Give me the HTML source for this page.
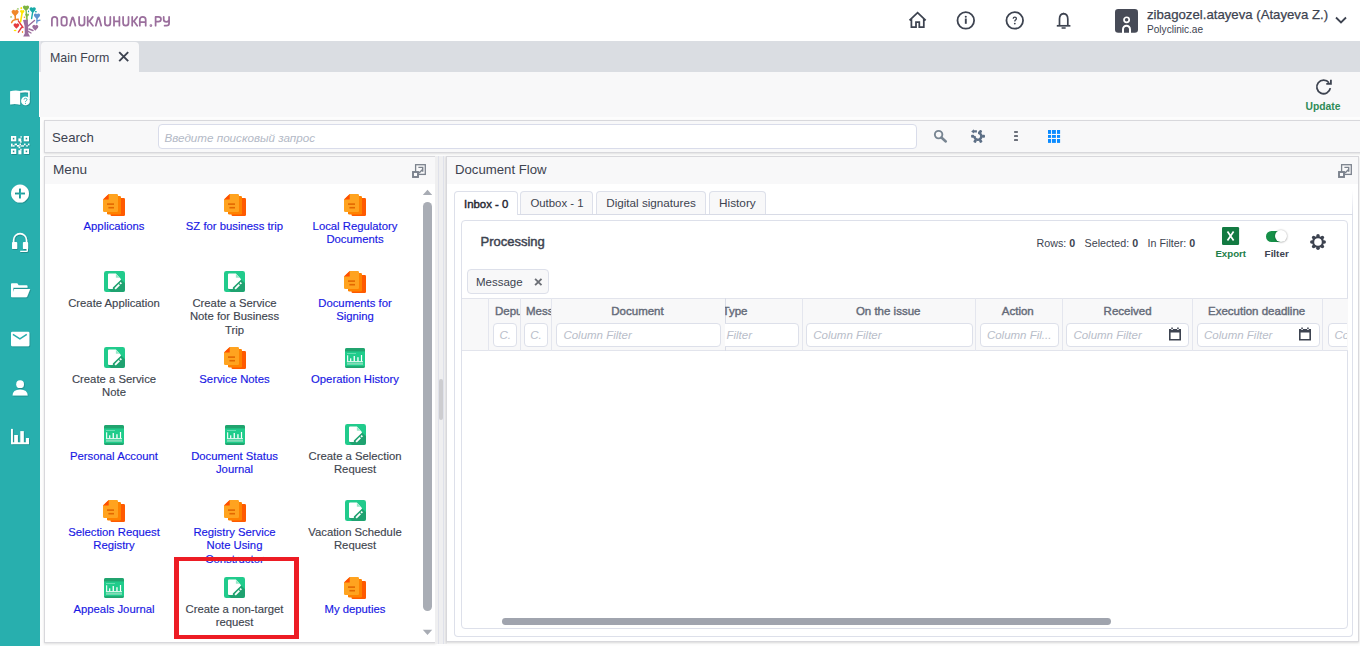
<!DOCTYPE html>
<html><head><meta charset="utf-8">
<style>
*{box-sizing:border-box;margin:0;padding:0}
html,body{width:1360px;height:646px;overflow:hidden;background:#fdfdfd;font-family:"Liberation Sans",sans-serif;color:#3d4350}
.a{position:absolute}
.t{position:absolute;white-space:nowrap;line-height:1}
#hdr{left:0;top:0;width:1360px;height:41px;background:#fff}
#side{left:0;top:41px;width:39px;height:605px;background:#28afae}
#tabbar{left:39px;top:41px;width:1321px;height:31px;background:#dadde2;border-left:2px solid #e4e4ea}
#tab1{left:41px;top:42px;width:98px;height:30px;background:#f8f8f9;border-radius:4px 4px 0 0}
#tool{left:39px;top:72px;width:1321px;height:45px;background:#f8f8f9;border-left:1px solid #fff}
#searchbox{left:44px;top:120px;width:1320px;height:32.5px;background:#f8f8f9;border:1px solid #d8d8dc;box-shadow:0 1px 2px rgba(0,0,0,.12)}
#sinput{left:158px;top:124px;width:759px;height:24.8px;background:#fff;border:1px solid #d9dcea;border-radius:4px}
#menu{left:44px;top:156px;width:392px;height:487px;background:#fff;border:1px solid #d8d8dc;box-shadow:0 1px 2px rgba(0,0,0,.12)}
#menuhdr{left:45px;top:157px;width:390px;height:27px;background:#f8f8f9}
#split{left:435px;top:156px;width:12px;height:488px;background:#efeff0}
#df{left:446px;top:156.3px;width:913px;height:486px;background:#fff;border:1px solid #d8d8dc;box-shadow:0 1px 2px rgba(0,0,0,.15)}
#dfhdr{left:447px;top:157.3px;width:911px;height:26.6px;background:#f8f8f9}
.mi{position:absolute;width:124px;text-align:center}
.mi svg{position:absolute;left:51px;top:0}
.mi .l{position:absolute;left:-10px;width:144px;top:25.7px;font-size:11.3px;line-height:13.6px;white-space:nowrap;color:#40454f;-webkit-text-stroke:0.15px currentColor}
.mi .b{color:#1818e4}
.dtab{position:absolute;top:191px;height:23.2px;border:1px solid #dde0ea;border-bottom:none;border-radius:4px 4px 0 0;background:#f8f8f9}
.hd{position:absolute;top:305.6px;font-size:11.5px;-webkit-text-stroke:0.4px #646a78;color:#646a78;white-space:nowrap;line-height:1}
.cf{position:absolute;top:323.4px;height:23.2px;border:1px solid #dde0ea;border-radius:4px;background:#fff;overflow:hidden}
.cf span{position:absolute;left:6px;top:6px;font-size:11.5px;font-style:italic;color:#b8bdc9;white-space:nowrap;line-height:1}
.vs{position:absolute;top:298px;width:1px;height:53px;background:#e4e6ee}

</style></head><body>
<div class="a" id="hdr"></div>
<svg class="a" style="left:0;top:0" width="50" height="41" viewBox="0 0 50 41">
<path d="M0 1L-0.93 0.02A0.56 0.56 0 0 1 0 -0.62A0.56 0.56 0 0 1 0.93 0.02Z" transform="translate(26 8.2) scale(3.0 3.1500000000000004)" fill="#7cb342"/>
<path d="M0 1L-0.93 0.02A0.56 0.56 0 0 1 0 -0.62A0.56 0.56 0 0 1 0.93 0.02Z" transform="translate(32.7 10) scale(3.0 3.1500000000000004)" fill="#17aaa8"/>
<path d="M0 1L-0.93 0.02A0.56 0.56 0 0 1 0 -0.62A0.56 0.56 0 0 1 0.93 0.02Z" transform="translate(15.1 12.9) scale(3.4 3.57)" fill="#f0882a"/>
<path d="M0 1L-0.93 0.02A0.56 0.56 0 0 1 0 -0.62A0.56 0.56 0 0 1 0.93 0.02Z" transform="translate(22.2 11.9) scale(2.1 2.205)" fill="#ffe500"/>
<path d="M0 1L-0.93 0.02A0.56 0.56 0 0 1 0 -0.62A0.56 0.56 0 0 1 0.93 0.02Z" transform="translate(27.1 15.2) scale(1.9 1.9949999999999999)" fill="#8cc152"/>
<path d="M0 1L-0.93 0.02A0.56 0.56 0 0 1 0 -0.62A0.56 0.56 0 0 1 0.93 0.02Z" transform="translate(37 16.2) scale(3.0 3.1500000000000004)" fill="#5d93cf"/>
<path d="M0 1L-0.93 0.02A0.56 0.56 0 0 1 0 -0.62A0.56 0.56 0 0 1 0.93 0.02Z" transform="translate(16.4 25.9) scale(2.8 2.94)" fill="#e5393f"/>
<path d="M0 1L-0.93 0.02A0.56 0.56 0 0 1 0 -0.62A0.56 0.56 0 0 1 0.93 0.02Z" transform="translate(35.3 27.6) scale(2.9 3.045)" fill="#9a6c9c"/>
<path d="M26.2 11.5L26.6 19" stroke="#7cb342" stroke-width="1.3" fill="none" stroke-linecap="round"/>
<path d="M32.6 12.5L31.6 18.5" stroke="#17aaa8" stroke-width="1.4" fill="none" stroke-linecap="round"/>
<path d="M15.2 15L15.3 19.2M11.6 22.6Q13 19.2 18.3 19.3" stroke="#f0882a" stroke-width="1.5" fill="none" stroke-linecap="round"/>
<path d="M22 13.5L20.6 21.6" stroke="#ffe500" stroke-width="1.6" fill="none" stroke-linecap="round"/>
<path d="M27 17L27.2 21" stroke="#8cc152" stroke-width="1.2" fill="none" stroke-linecap="round"/>
<path d="M37 18.5L36.8 23M37 21L40 20.2" stroke="#5d93cf" stroke-width="1.3" fill="none" stroke-linecap="round"/>
<path d="M18.3 20.8L23 27.5M21.5 27.5L18.4 32.2" stroke="#e5393f" stroke-width="1.4" fill="none" stroke-linecap="round"/>
<path d="M28 26L34.5 20.5M28.5 31.5L31 33M29 29L33 30.5" stroke="#9a6c9c" stroke-width="1.4" fill="none" stroke-linecap="round"/>
<path d="M23 20L27.8 19.6L28.4 33.5L30 36.6H23.2L24.8 33.5L24.6 26Z" fill="#9a6c9c"/>
<ellipse cx="21.3" cy="8.2" rx="0.9" ry="1.1" fill="#ffe500"/>
<ellipse cx="17.9" cy="8.9" rx="1.1" ry="0.7" fill="#8cc152"/>
<ellipse cx="11.1" cy="16.9" rx="1.1" ry="0.7" fill="#8cc152"/>
<ellipse cx="15.1" cy="30.5" rx="1.4" ry="0.8" fill="#ffe500"/>
<ellipse cx="22.5" cy="32" rx="0.7" ry="0.9" fill="#f0882a"/>
<ellipse cx="28.5" cy="11.4" rx="0.6" ry="0.9" fill="#17aaa8"/>
<ellipse cx="35.9" cy="11.8" rx="1.0" ry="0.7" fill="#17aaa8"/>
<ellipse cx="24.4" cy="17.2" rx="0.7" ry="0.8" fill="#f0882a"/>
</svg>

<svg class="a" style="left:51px;top:15.5px" width="121" height="12" viewBox="0 0 121 12">
<g fill="none" stroke="#9b6f9d" stroke-width="1.75" stroke-linecap="round" stroke-linejoin="round">
<path transform="translate(0,0)" d="M0.9 9.7V3.6Q0.9 0.9 3.6 0.9Q6.3 0.9 6.3 3.6V9.7"/>
<rect x="10.4" y="0.9" width="5.4" height="8.8" rx="2.4"/>
<path transform="translate(18.1,0)" d="M0.9 9.7L3 2Q3.6 0.6 4.2 2L6.3 9.7"/>
<path transform="translate(27.2,0)" d="M0.9 0.9V7Q0.9 9.7 3.6 9.7Q6.3 9.7 6.3 7V0.9"/>
<path transform="translate(35.8,0)" d="M0.9 0.9V9.7M0.9 5.3H2.6L6 0.9M2.6 5.3L6.1 9.7"/>
<path transform="translate(43.9,0)" d="M0.9 9.7L3 2Q3.6 0.6 4.2 2L6.3 9.7"/>
<path transform="translate(53,0)" d="M0.9 0.9V7Q0.9 9.7 3.6 9.7Q6.3 9.7 6.3 7V0.9"/>
<path transform="translate(62.1,0)" d="M0.9 0.9V9.7M6.3 0.9V9.7M0.9 5.3H6.3"/>
<path transform="translate(71.2,0)" d="M0.9 0.9V7Q0.9 9.7 3.6 9.7Q6.3 9.7 6.3 7V0.9"/>
<path transform="translate(80.3,0)" d="M0.9 0.9V9.7M0.9 5.3H2.6L5.8 0.9M2.6 5.3L5.9 9.7"/>
<path transform="translate(87.9,0)" d="M0.9 9.7V3.8Q0.9 0.9 3.8 0.9Q6.8 0.9 6.8 3.8V9.7M0.9 6.2H6.8"/>
<circle cx="99.9" cy="9.5" r="0.5"/>
<path transform="translate(103.7,0)" d="M0.9 9.7V0.9H3.8Q6.3 0.9 6.3 3.3Q6.3 5.6 3.8 5.6H0.9"/>
<path transform="translate(111.8,0)" d="M0.9 0.9V3.6Q0.9 5.9 3.6 5.9Q6.3 5.9 6.3 3.6V0.9M6.3 3.6V7.3Q6.3 9.7 3.6 9.7H1.8"/>
</g>
</svg>
<svg class="a" style="left:907px;top:9px" width="21" height="21" viewBox="0 0 21 21">
<path d="M2.5 11.4L10.6 3.6L18.7 11.4M4.4 9.6V18.1H9V13H12.3V18.1H16.8V9.6" fill="none" stroke="#3d4350" stroke-width="1.75"/>
</svg>
<svg class="a" style="left:955px;top:10px" width="22" height="22" viewBox="0 0 22 22">
<circle cx="10.8" cy="10.4" r="8.3" fill="none" stroke="#3d4350" stroke-width="1.8"/>
<circle cx="10.8" cy="6.8" r="1.05" fill="#3d4350"/>
<rect x="9.85" y="8.5" width="1.9" height="5.3" fill="#3d4350"/>
</svg>
<svg class="a" style="left:1004px;top:10px" width="22" height="22" viewBox="0 0 22 22">
<circle cx="10.75" cy="10.4" r="8.3" fill="none" stroke="#3d4350" stroke-width="1.8"/>
<path d="M9.2 8.7Q9.2 7.1 10.8 7.1Q12.4 7.1 12.4 8.6Q12.4 9.6 11.4 10.1Q10.8 10.5 10.8 11.6" fill="none" stroke="#3d4350" stroke-width="1.3"/>
<circle cx="10.8" cy="13.6" r="0.9" fill="#3d4350"/>
</svg>
<svg class="a" style="left:1053px;top:9.3px" width="21" height="21" viewBox="0 0 21 21">
<path d="M6.5 16.8V10Q6.5 5.1 10.6 4.6Q14.8 5.1 14.8 10V16.8" fill="none" stroke="#3d4350" stroke-width="1.7"/>
<path d="M3.8 16.8H17.4" stroke="#3d4350" stroke-width="1.7"/>
<path d="M9.6 4.9L10.6 3.4L11.6 4.9Z" fill="#3d4350"/>
<path d="M9.1 19.1H12.1" stroke="#3d4350" stroke-width="1.5" stroke-linecap="round"/>
</svg>
<svg class="a" style="left:1115px;top:9px" width="23" height="24" viewBox="0 0 23 24">
<rect width="23" height="23.7" rx="3.2" fill="#474b57"/>
<circle cx="11.6" cy="10.85" r="2.6" fill="none" stroke="#fff" stroke-width="1.7"/>
<path d="M8 24V20.3A3.5 3.5 0 0 1 15 20.3V24" fill="none" stroke="#fff" stroke-width="2"/>
</svg>
<div class="t" style="left:1147px;top:7.7px;font-size:13.2px;color:#3d4350;-webkit-text-stroke:0.25px #3d4350">zibagozel.atayeva (Atayeva Z.)</div>
<div class="t" style="left:1147px;top:25px;font-size:10.1px;color:#3d4350">Polyclinic.ae</div>
<svg class="a" style="left:1333px;top:14px" width="16" height="12" viewBox="0 0 16 12">
<path d="M3 3.5L8 8.5L13 3.5" fill="none" stroke="#3d4350" stroke-width="1.8"/>
</svg>
<div class="a" id="side"></div>
<div class="a" style="left:39px;top:117px;width:1px;height:529px;background:#28afae"></div>
<svg class="a" style="left:0;top:41px" width="39" height="420" viewBox="0 41 39 420">
<g fill="#fff" filter="url(#sh)">
<!-- book -->
<path d="M10.1 91.3Q15 89.8 20.1 90.9V104.7Q15 103.3 10.1 104.5Z"/>
<path d="M20.1 90.9Q25 89.7 29.8 90.7V99H28.1V92.5Q25 91.9 20.1 92.7Z"/>
<circle cx="25.5" cy="100.9" r="4.4"/>
<!-- qr -->
<path d="M11 136h5.2v5.2h-5.2Z M12.8 137.8v1.6h1.6v-1.6Z" fill-rule="evenodd"/><path d="M23.8 136h5.2v5.2h-5.2Z M25.6 137.8v1.6h1.6v-1.6Z" fill-rule="evenodd"/><path d="M11 148.8h5.2v5.2h-5.2Z M12.8 150.60000000000002v1.6h1.6v-1.6Z" fill-rule="evenodd"/><path d="M23.8 148.8h5.2v5.2h-5.2Z M25.6 150.60000000000002v1.6h1.6v-1.6Z" fill-rule="evenodd"/>
<rect x="20.4" y="136.2" width="1.4" height="1.4"/><rect x="18.4" y="138.4" width="2.8" height="2.9"/><rect x="20" y="141.2" width="1.6" height="1.4"/>
<rect x="11" y="143.6" width="1.6" height="3"/><rect x="12.6" y="145.2" width="2" height="1.4"/><rect x="14.6" y="143.6" width="2.4" height="1.6"/><rect x="17" y="145" width="2.5" height="1.6"/><rect x="19.5" y="143.6" width="1.5" height="1.4"/><rect x="20.5" y="145.3" width="3.5" height="1.3"/><rect x="24" y="143.6" width="1.6" height="1.6"/><rect x="26.3" y="145" width="1.4" height="1.6"/><rect x="28" y="143.6" width="1.4" height="1.6"/>
<rect x="18.6" y="146.6" width="1.6" height="1.6"/><rect x="20.2" y="148.8" width="1.4" height="1.4"/><rect x="18.4" y="150.2" width="3" height="4"/>
<!-- plus circle -->
<path d="M20 184.6a9 9 0 1 0 0.01 0Z M19 188.5h2v4h4v2h-4v4h-2v-4h-4v-2h4Z" fill-rule="evenodd"/>
<!-- headset -->
<path d="M12.8 243.5V240.1A7.25 7.25 0 0 1 27.3 240.1V243.5H25.7V240.1A5.65 5.65 0 0 0 14.4 240.1V243.5Z"/>
<rect x="12" y="242" width="5.2" height="7.1" rx="0.9"/>
<rect x="22.9" y="242" width="5.2" height="7.1" rx="0.9"/>
<path d="M26.6 248.5H28V250.6A1.5 1.5 0 0 1 26.5 252.1H20.2V250.7H26.6Z"/>
<!-- folder -->
<path d="M11.9 283.2H17.3L18.7 285.2H26.6Q27.5 285.2 27.5 286.1V287.7H13.3V296.8H11V284.1Q11 283.2 11.9 283.2Z"/>
<path d="M14.2 289H30.2L27.2 296.6Q26.9 297.3 26.1 297.3H11.8Q11 297.3 11.2 296.6Z"/>
<!-- mail -->
<rect x="11" y="331.7" width="18.4" height="14.5" rx="1.2"/>
<!-- user -->
<circle cx="20.1" cy="384.2" r="3.9"/>
<path d="M12.5 395.4Q12.6 389.5 20.1 389.4Q27.6 389.5 27.7 395.4Z"/>
<!-- chart -->
<rect x="11" y="428.9" width="1.9" height="15.2"/>
<rect x="11" y="442.3" width="18" height="1.8"/>
<rect x="14.2" y="435" width="3.7" height="8"/>
<rect x="20.3" y="431.1" width="3.5" height="12"/>
<rect x="25.9" y="438" width="3.1" height="5"/>
</g>
<path d="M24 99.6Q24 98.3 25.5 98.3Q27 98.3 27 99.5Q27 100.3 26.1 100.8Q25.5 101.1 25.5 101.9" fill="none" stroke="#28afae" stroke-width="0.9"/>
<circle cx="25.5" cy="103.2" r="0.55" fill="#28afae"/>
<path d="M12.9 334.3L19.9 338.9L26.8 334.3" fill="none" stroke="#28afae" stroke-width="1.5"/>
<defs><filter id="sh" x="-10%" y="-10%" width="120%" height="120%"><feDropShadow dx="0.6" dy="0.8" stdDeviation="0.3" flood-color="#000" flood-opacity="0.25"/></filter></defs>
</svg>
<div class="a" id="tabbar"></div>
<div class="a" id="tab1"></div>
<div class="t" style="left:50px;top:52px;font-size:12.4px;color:#3d4350">Main Form</div>
<svg class="a" style="left:118px;top:51px" width="12" height="12" viewBox="0 0 12 12"><path d="M1.2 1.2L10.2 10.2M10.2 1.2L1.2 10.2" stroke="#3d4350" stroke-width="1.9"/></svg>
<div class="a" id="tool"></div>
<svg class="a" style="left:1314px;top:77px" width="20" height="20" viewBox="0 0 20 20">
<path d="M16.3 11.1A6.8 6.8 0 1 1 15 5.8" fill="none" stroke="#3d4350" stroke-width="1.8"/>
<path d="M12.3 6.9H16.9V2.7" fill="none" stroke="#3d4350" stroke-width="1.8"/>
</svg>
<div class="t" style="left:1305.5px;top:101.5px;font-size:10.3px;font-weight:bold;color:#2e8b57">Update</div>
<div class="a" id="searchbox"></div>
<div class="t" style="left:52px;top:131px;font-size:13.2px">Search</div>
<div class="a" id="sinput"></div>
<div class="t" style="left:164.5px;top:132.2px;font-size:11.65px;font-style:italic;color:#b3b9c6">Введите поисковый запрос</div>
<svg class="a" style="left:932px;top:128px" width="17" height="17" viewBox="0 0 17 17">
<circle cx="6.6" cy="6.6" r="3.75" fill="none" stroke="#788592" stroke-width="1.9"/>
<path d="M9.4 9.5L13.8 13.5" stroke="#788592" stroke-width="2.5" stroke-linecap="round"/>
</svg>
<svg class="a" style="left:966px;top:124px" width="24" height="24" viewBox="0 0 24 24"><path d="M12.02 8.85A3.45 3.45 0 1 1 8.48 11.82" fill="none" stroke="#5d6f86" stroke-width="2.5"/><rect x="12.89" y="6.17" width="3" height="2.9" rx="0.9" transform="rotate(-62 14.39 7.62)" fill="#5d6f86"/><rect x="16.00" y="10.85" width="3" height="2.9" rx="0.9" transform="rotate(0 17.50 12.30)" fill="#5d6f86"/><rect x="13.20" y="15.70" width="3" height="2.9" rx="0.9" transform="rotate(60 14.70 17.15)" fill="#5d6f86"/><rect x="7.60" y="15.70" width="3" height="2.9" rx="0.9" transform="rotate(120 9.10 17.15)" fill="#5d6f86"/><rect x="5.10" y="10.85" width="3" height="2.9" rx="0.9" transform="rotate(180 6.60 12.30)" fill="#5d6f86"/><path d="M5.2 7.4L7.9 5.2V6.3H10.9V8.6H7.9V9.6Z" fill="#5d6f86"/></svg>
<svg class="a" style="left:1012px;top:129px" width="8" height="14" viewBox="0 0 8 14">
<g fill="#3d4350"><rect x="2" y="2.2" width="4" height="1.5" rx=".6"/><rect x="2" y="6.3" width="4" height="1.5" rx=".6"/><rect x="2" y="10.3" width="4" height="1.5" rx=".6"/></g>
</svg>
<svg class="a" style="left:1047px;top:129px" width="15" height="15" viewBox="0 0 15 15"><g fill="#0b8bff"><rect x="1" y="1" width="3.1" height="3.9"/><rect x="1" y="6" width="3.1" height="2.9"/><rect x="1" y="10" width="3.1" height="3.9"/><rect x="5" y="1" width="3.9" height="3.9"/><rect x="5" y="6" width="3.9" height="2.9"/><rect x="5" y="10" width="3.9" height="3.9"/><rect x="10" y="1" width="3.1" height="3.9"/><rect x="10" y="6" width="3.1" height="2.9"/><rect x="10" y="10" width="3.1" height="3.9"/></g></svg>
<div class="a" id="menu"></div>
<div class="a" id="menuhdr"></div>
<div class="t" style="left:53px;top:163px;font-size:13.6px">Menu</div>
<svg class="a" style="left:408px;top:160px" width="22" height="22" viewBox="0 0 22 22">
<g fill="none" stroke="#7b828d">
<rect x="7.6" y="4.7" width="9.7" height="9.7" stroke-width="1.3"/>
<path d="M11 13L14.6 9.4M10.4 7.4H14.7V11.7" stroke-width="1.4"/>
<rect x="5" y="12" width="5" height="5" stroke-width="1.9" fill="#fafafb"/>
</g></svg>
<svg class="a" style="left:422px;top:188px" width="11" height="8" viewBox="0 0 11 8"><path d="M0.8 7H10.2L5.5 1.8Z" fill="#a8acb4"/></svg>
<div class="a" style="left:423px;top:202px;width:9px;height:409px;border-radius:4.5px;background:#a9adb5"></div>
<svg class="a" style="left:422px;top:629px" width="11" height="8" viewBox="0 0 11 8"><path d="M0.8 0.8H10.2L5.5 6Z" fill="#a8acb4"/></svg>
<div class="a" id="split"></div>
<div class="a" style="left:438px;top:156px;width:1px;height:488px;background:#dfe1ea"></div>
<div class="a" style="left:443px;top:156px;width:1px;height:488px;background:#dfe1ea"></div>
<div class="a" style="left:439px;top:379px;width:4px;height:41px;border-radius:2px;background:#cdcdd0"></div>
<svg width="0" height="0" style="position:absolute"><defs>
<symbol id="ior" viewBox="0 0 22 22">
<rect x="7.5" y="4" width="14.5" height="18" rx="1.2" fill="#ff5a00"/>
<rect x="4" y="2" width="14" height="18.4" rx="1.2" fill="#ff8200"/>
<path d="M5.7 0H13.8a1.2 1.2 0 0 1 1.2 1.2V16.8a1.2 1.2 0 0 1-1.2 1.2H1.2A1.2 1.2 0 0 1 0 16.8V5.6Z" fill="#ffa31f"/>
<path d="M0 5.6L5.7 0V5.6Z" fill="#ff4f00"/>
<rect x="4" y="9.3" width="7" height="1.6" fill="#e46800"/>
<rect x="5.4" y="12.9" width="5.6" height="1.6" fill="#e46800"/>
</symbol>
<symbol id="ied" viewBox="0 0 21 21">
<rect width="21" height="21" rx="2.3" fill="#21cb8c"/>
<path d="M16.9 8.25L21 12.35V18.7A2.3 2.3 0 0 1 18.7 21H7.1L4 17.9Z" fill="#1fa270"/>
<path d="M5 2.6H11.9L16.9 8.1V8.65L8.85 16.5V17.9H5A1 1 0 0 1 4 16.9V3.6A1 1 0 0 1 5 2.6Z" fill="#fff"/>
<path d="M11.9 2.9L15.8 6.85H11.9Z" fill="#9ae8c9"/>
<path d="M11.1 17.9L15.3 13.7" stroke="#fff" stroke-width="1.9"/>
<path d="M16.1 12.9L17.3 11.7" stroke="#fff" stroke-width="1.9"/>
</symbol>
<symbol id="ich" viewBox="0 0 20 20">
<clipPath id="cpch"><rect width="20" height="20" rx="2"/></clipPath>
<g clip-path="url(#cpch)">
<rect width="20" height="20" fill="#20cc8b"/>
<rect width="20" height="3.4" fill="#21a36e"/>
<rect y="18.2" width="20" height="1.8" fill="#21a36e"/>
</g>
<rect x="2" y="5.3" width="9" height="0.7" fill="#86e4bf"/>
<rect x="1.9" y="13.2" width="16" height="1" fill="#fff"/>
<rect x="2" y="14.8" width="16" height="2" fill="#7fdcb6"/>
<rect x="2.1" y="7.3" width="1.1" height="6" fill="#fff"/>
<rect x="5.1" y="10.3" width="1.2" height="3" fill="#fff"/>
<rect x="8.6" y="8" width="1.3" height="5.3" fill="#fff"/>
<rect x="12.3" y="9.2" width="1.3" height="4.1" fill="#fff"/>
<rect x="15.9" y="7" width="1.2" height="6.3" fill="#fff"/>
</symbol>
</defs></svg>
<div class="mi" style="left:52px;top:194px"><svg width="22" height="22" style="left:51px;top:0"><use href="#ior"/></svg><div class="l b">Applications</div></div>
<div class="mi" style="left:172.5px;top:194px"><svg width="22" height="22" style="left:51px;top:0"><use href="#ior"/></svg><div class="l b">SZ for business trip</div></div>
<div class="mi" style="left:293px;top:194px"><svg width="22" height="22" style="left:51px;top:0"><use href="#ior"/></svg><div class="l b">Local Regulatory<br>Documents</div></div>
<div class="mi" style="left:52px;top:271px"><svg width="21" height="21" style="left:51.7px;top:0.2px"><use href="#ied"/></svg><div class="l">Create Application</div></div>
<div class="mi" style="left:172.5px;top:271px"><svg width="21" height="21" style="left:51.7px;top:0.2px"><use href="#ied"/></svg><div class="l">Create a Service<br>Note for Business<br>Trip</div></div>
<div class="mi" style="left:293px;top:271px"><svg width="22" height="22" style="left:51px;top:0"><use href="#ior"/></svg><div class="l b">Documents for<br>Signing</div></div>
<div class="mi" style="left:52px;top:347px"><svg width="21" height="21" style="left:51.7px;top:0.2px"><use href="#ied"/></svg><div class="l">Create a Service<br>Note</div></div>
<div class="mi" style="left:172.5px;top:347px"><svg width="22" height="22" style="left:51px;top:0"><use href="#ior"/></svg><div class="l b">Service Notes</div></div>
<div class="mi" style="left:293px;top:347px"><svg width="20" height="20" style="left:52px;top:1px"><use href="#ich"/></svg><div class="l b">Operation History</div></div>
<div class="mi" style="left:52px;top:424px"><svg width="20" height="20" style="left:52px;top:1px"><use href="#ich"/></svg><div class="l b">Personal Account</div></div>
<div class="mi" style="left:172.5px;top:424px"><svg width="20" height="20" style="left:52px;top:1px"><use href="#ich"/></svg><div class="l b">Document Status<br>Journal</div></div>
<div class="mi" style="left:293px;top:424px"><svg width="21" height="21" style="left:51.7px;top:0.2px"><use href="#ied"/></svg><div class="l">Create a Selection<br>Request</div></div>
<div class="mi" style="left:52px;top:500px"><svg width="22" height="22" style="left:51px;top:0"><use href="#ior"/></svg><div class="l b">Selection Request<br>Registry</div></div>
<div class="mi" style="left:172.5px;top:500px"><svg width="22" height="22" style="left:51px;top:0"><use href="#ior"/></svg><div class="l b">Registry Service<br>Note Using<br>Constructor</div></div>
<div class="mi" style="left:293px;top:500px"><svg width="21" height="21" style="left:51.7px;top:0.2px"><use href="#ied"/></svg><div class="l">Vacation Schedule<br>Request</div></div>
<div class="mi" style="left:52px;top:577px"><svg width="20" height="20" style="left:52px;top:1px"><use href="#ich"/></svg><div class="l b">Appeals Journal</div></div>
<div class="mi" style="left:172.5px;top:577px"><svg width="21" height="21" style="left:51.7px;top:0.2px"><use href="#ied"/></svg><div class="l">Create a non-target<br>request</div></div>
<div class="mi" style="left:293px;top:577px"><svg width="22" height="22" style="left:51px;top:0"><use href="#ior"/></svg><div class="l b">My deputies</div></div>
<div class="a" id="df"></div>
<div class="a" id="dfhdr"></div>
<div class="t" style="left:455px;top:163px;font-size:13.2px">Document Flow</div>
<svg class="a" style="left:1334px;top:159.5px" width="22" height="22" viewBox="0 0 22 22">
<g fill="none" stroke="#7b828d">
<rect x="7.6" y="4.7" width="9.7" height="9.7" stroke-width="1.3"/>
<path d="M11 13L14.6 9.4M10.4 7.4H14.7V11.7" stroke-width="1.4"/>
<rect x="5" y="12" width="5" height="5" stroke-width="1.9" fill="#fafafb"/>
</g></svg>
<!-- tab content -->
<div class="a" style="left:454px;top:214px;width:898.5px;height:422.5px;border:1px solid #dde0ea;border-top:none;border-radius:0 0 4px 4px"></div>
<div class="a" style="left:454px;top:213.7px;width:898.5px;height:1px;background:#d8dbe6"></div>
<div class="a" style="left:1351.7px;top:190px;width:1px;height:24px;background:linear-gradient(#fff,#dde0ea)"></div>
<div class="dtab" style="left:454px;width:63.5px;height:23.7px;background:#fff"></div>
<div class="t" style="left:464px;top:199px;font-size:11.4px;color:#1f2530;-webkit-text-stroke:0.4px #1f2530">Inbox - 0</div>
<div class="dtab" style="left:519.8px;width:73.5px"></div>
<div class="t" style="left:530.4px;top:198px;font-size:11.4px;color:#3d4350">Outbox - 1</div>
<div class="dtab" style="left:596.4px;width:110px"></div>
<div class="t" style="left:606.2px;top:197.3px;font-size:11.7px;color:#3d4350">Digital signatures</div>
<div class="dtab" style="left:709.3px;width:56.3px"></div>
<div class="t" style="left:719px;top:197.5px;font-size:11.8px;color:#3d4350">History</div>
<!-- grid panel -->
<div class="a" style="left:461.3px;top:220.3px;width:887px;height:408.3px;border:1px solid #dde0ea;border-radius:4px;background:#fff"></div>
<div class="t" style="left:480.5px;top:235.2px;font-size:13px;color:#3d4350;-webkit-text-stroke:0.45px #3d4350">Processing</div>
<div class="t" style="left:1036.6px;top:238px;font-size:10.7px;color:#3d4350">Rows: <b>0</b></div>
<div class="t" style="left:1084.6px;top:238px;font-size:10.7px;color:#3d4350">Selected: <b>0</b></div>
<div class="t" style="left:1147.6px;top:238px;font-size:10.7px;color:#3d4350">In Filter: <b>0</b></div>
<svg class="a" style="left:1222px;top:227px" width="18" height="18" viewBox="0 0 18 18">
<rect x="0" y="0" width="17.1" height="18" rx="1.3" fill="#137a42"/>
<path d="M5.5 4.6L11.6 13.5M11.6 4.6L5.5 13.5" stroke="#fff" stroke-width="1.7"/>
</svg>
<div class="t" style="left:1215.4px;top:249px;font-size:9.7px;font-weight:bold;color:#1e8049">Export</div>
<div class="a" style="left:1266px;top:230.9px;width:19px;height:11.1px;border-radius:5.5px;background:#168f48"></div>
<div class="a" style="left:1275.1px;top:230.1px;width:12px;height:12px;border-radius:50%;background:#fff;box-shadow:0 0.3px 2px rgba(0,0,0,.45)"></div>
<div class="t" style="left:1264.6px;top:249px;font-size:9.9px;font-weight:bold;color:#3d4350">Filter</div>
<svg class="a" style="left:1307.9px;top:231.9px" width="20" height="20" viewBox="0 0 20 20"><g fill="#3d4350"><circle cx="10" cy="10" r="6"/><circle cx="16.20" cy="10.00" r="1.75"/><circle cx="14.38" cy="14.38" r="1.75"/><circle cx="10.00" cy="16.20" r="1.75"/><circle cx="5.62" cy="14.38" r="1.75"/><circle cx="3.80" cy="10.00" r="1.75"/><circle cx="5.62" cy="5.62" r="1.75"/><circle cx="10.00" cy="3.80" r="1.75"/><circle cx="14.38" cy="5.62" r="1.75"/></g><circle cx="10" cy="10" r="3.8" fill="#fff"/></svg>
<!-- message chip -->
<div class="a" style="left:467.2px;top:269.3px;width:82.1px;height:24.6px;border:1px solid #dde0ea;border-radius:4px;background:#f8f8f9"></div>
<div class="t" style="left:476px;top:277px;font-size:11.5px;color:#3d4350">Message</div>
<svg class="a" style="left:533px;top:276.5px" width="11" height="11" viewBox="0 0 11 11"><path d="M2.1 1.9L8.5 8.1M8.5 1.9L2.1 8.1" stroke="#6c6f76" stroke-width="1.9"/></svg>
<!-- header row -->
<div class="a" style="left:462px;top:298px;width:886px;height:53px;background:#f8f8f9;border-top:1px solid #e2e4ec;border-bottom:1px solid #e2e4ec"></div>
<div class="vs" style="left:488px"></div>
<div class="vs" style="left:520px"></div>
<div class="vs" style="left:551px"></div>
<div class="vs" style="left:724.5px;background:#d9dce6"></div>
<div class="vs" style="left:801.5px"></div>
<div class="vs" style="left:975px"></div>
<div class="vs" style="left:1061.5px"></div>
<div class="vs" style="left:1192px"></div>
<div class="vs" style="left:1322px"></div>
<div class="a" style="left:493px;top:298px;width:27px;height:53px;overflow:hidden"><div class="hd" style="left:2px;top:8px">Deputy</div></div>
<div class="a" style="left:524px;top:298px;width:27px;height:53px;overflow:hidden"><div class="hd" style="left:2px;top:8px">Message</div></div>
<div class="hd" style="left:611.3px">Document</div>
<div class="a" style="left:725px;top:298px;width:76px;height:53px;overflow:hidden"><div class="hd" style="left:-2.5px;top:8px">Type</div></div>
<div class="hd" style="left:855.9px">On the issue</div>
<div class="hd" style="left:1001.8px">Action</div>
<div class="hd" style="left:1103.6px">Received</div>
<div class="hd" style="left:1208px">Execution deadline</div>
<div class="cf" style="left:493.4px;width:23.2px"><span style="left:5px">C.</span></div>
<div class="cf" style="left:524.2px;width:24.3px"><span style="left:5px">C.</span></div>
<div class="cf" style="left:556.4px;width:165.1px"><span>Column Filter</span></div>
<div class="a" style="left:725px;top:320px;width:76px;height:30px;overflow:hidden"><div class="cf" style="left:-48.4px;top:3.4px;width:122px"><span style="left:6px">Column Filter</span></div></div>
<div class="cf" style="left:806.2px;width:166.5px"><span>Column Filter</span></div>
<div class="cf" style="left:979.9px;width:79px"><span>Column Fil...</span></div>
<div class="cf" style="left:1066.4px;width:123.1px"><span>Column Filter</span></div>
<div class="cf" style="left:1197px;width:122.7px"><span>Column Filter</span></div>
<div class="a" style="left:1322.5px;top:320px;width:24.5px;height:30px;overflow:hidden"><div class="cf" style="left:5px;top:3.4px;width:100px"><span>Column Filter</span></div></div>
<svg class="a" style="left:1167px;top:326px" width="16" height="16" viewBox="0 0 16 16"><path fill="#3d4350" fill-rule="evenodd" d="M2 3h12v11.6H2Z M3.6 6.5v6.5h8.8V6.5Z M4.3 1.5h1.5v2.5H4.3Z M10.2 1.5h1.5v2.5H10.2Z"/></svg>
<svg class="a" style="left:1297px;top:326px" width="16" height="16" viewBox="0 0 16 16"><path fill="#3d4350" fill-rule="evenodd" d="M2 3h12v11.6H2Z M3.6 6.5v6.5h8.8V6.5Z M4.3 1.5h1.5v2.5H4.3Z M10.2 1.5h1.5v2.5H10.2Z"/></svg>
<!-- h scrollbar -->
<div class="a" style="left:501.8px;top:618.2px;width:309px;height:6.8px;border-radius:3.4px;background:#a0a4ae;width:609px"></div>
<div class="a" style="left:174px;top:557px;width:125px;height:81.7px;border:solid #ed1c24;border-width:4.8px 5px 4.7px 5px"></div>
</body></html>
